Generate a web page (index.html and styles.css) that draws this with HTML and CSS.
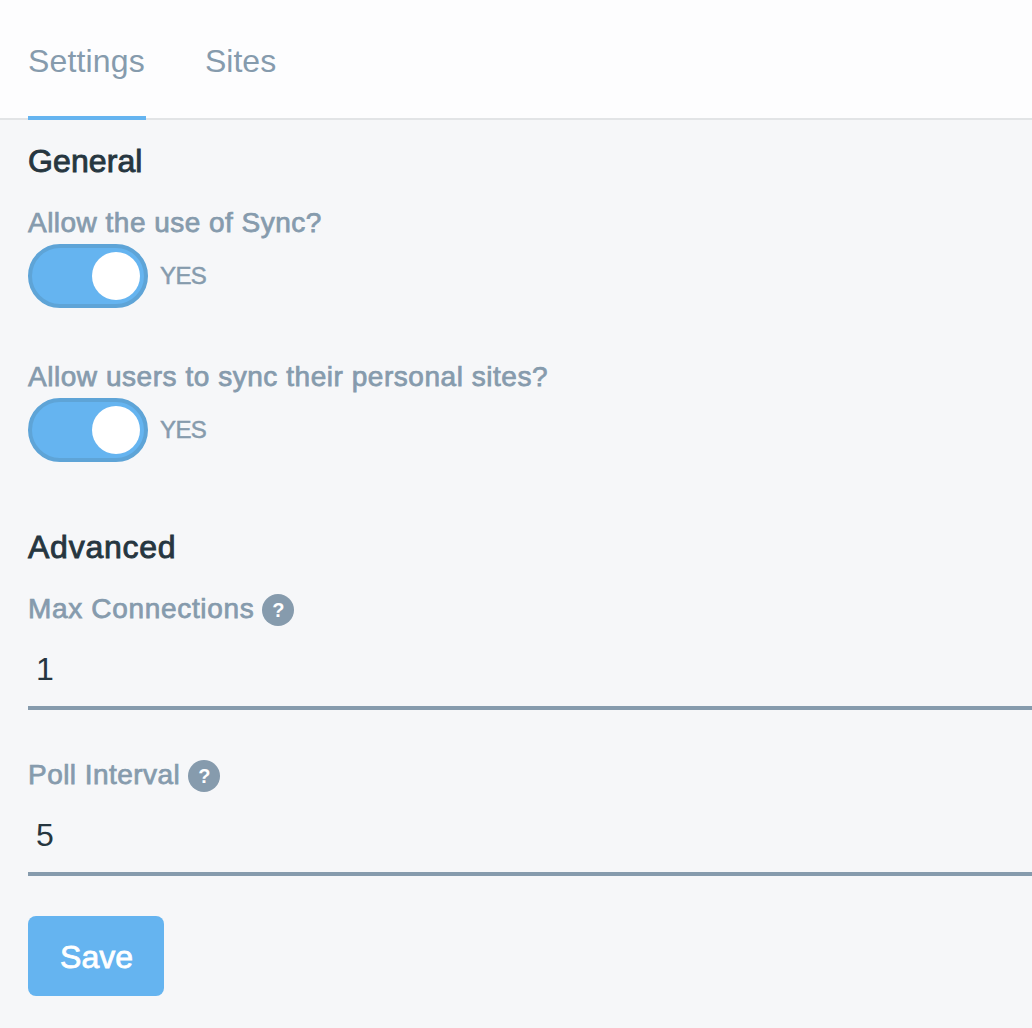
FILE: index.html
```html
<!DOCTYPE html>
<html lang="en">
<head>
<meta charset="utf-8">
<title>Sync settings</title>
<link rel="stylesheet" href="styles.css">
</head>
<body>
<nav class="tabs">
  <a class="tab active">Settings</a>
  <a class="tab">Sites</a>
</nav>
<main class="content">
  <h2 class="heading">General</h2>
  <section class="option">
    <div class="label">Allow the use of Sync?</div>
    <div class="toggle-row"><span class="toggle"><span class="knob"></span></span><span class="state">YES</span></div>
  </section>
  <section class="option">
    <div class="label label-users">Allow users to sync their personal sites?</div>
    <div class="toggle-row"><span class="toggle"><span class="knob"></span></span><span class="state">YES</span></div>
  </section>
  <h2 class="heading advanced">Advanced</h2>
  <section class="field">
    <div class="label label-max">Max Connections<span class="help">?</span></div>
    <div class="value">1</div>
  </section>
  <section class="field">
    <div class="label label-poll">Poll Interval<span class="help">?</span></div>
    <div class="value">5</div>
  </section>
  <button class="save">Save</button>
</main>
</body>
</html>
```
FILE: styles.css
```css
* { box-sizing: border-box; }
body { margin: 0; height: 1028px; overflow: hidden; background: #f6f7f9; color: #263640; font-family: "Liberation Sans", Arial, sans-serif; }
.tabs { display: flex; gap: 59px; height: 120px; padding-left: 28px; background: #fdfdfe; border-bottom: 2px solid #e2e4e6; }
.tab { height: 120px; padding-top: 42px; font-size: 32px; line-height: 38px; color: #869bad; white-space: nowrap; }
.active { width: 118px; border-bottom: 4px solid #65b4f0; letter-spacing: 0.15px; }
.content { padding-left: 28px; }
.heading { margin: 0; padding-top: 22px; height: 82px; font-size: 32px; line-height: 38px; font-weight: 400; letter-spacing: 0.1px; -webkit-text-stroke: 0.9px currentColor; }
.option { height: 154px; }
.label { display: flex; align-items: center; height: 42px; font-size: 28px; line-height: 42px; letter-spacing: 0.48px; color: #869bad; white-space: nowrap; -webkit-text-stroke: 0.75px currentColor; }
.label-users { letter-spacing: 0.54px; }
.label-max { letter-spacing: 0.67px; }
.label-poll { letter-spacing: 0.46px; }
.toggle-row { display: flex; align-items: center; gap: 12px; height: 64px; }
.toggle { display: flex; align-items: center; justify-content: flex-end; width: 120px; height: 64px; padding-right: 4px; border: 4px solid #5ea4d7; border-radius: 32px; background: #65b4f0; }
.knob { width: 48px; height: 48px; border-radius: 50%; background: #fff; }
.state { font-size: 24px; letter-spacing: -0.6px; color: #869bad; -webkit-text-stroke: 0.5px currentColor; }
.advanced { padding-top: 18px; height: 78px; letter-spacing: 0.75px; }
.field { height: 166px; }
.help { display: flex; align-items: center; justify-content: center; width: 32px; height: 32px; margin: 2px 0 0 8px; border-radius: 50%; background: #869bad; color: #fff; font-size: 20px; font-weight: 700; line-height: 32px; letter-spacing: 0; -webkit-text-stroke: 0; }
.value { height: 80px; padding: 20px 8px 0; border-bottom: 4px solid #869bad; font-size: 32px; line-height: 38px; }
.save { display: block; width: 136px; height: 80px; margin: -4px 0 0; padding: 2px 0 0 1px; border: 0; border-radius: 8px; background: #65b4f0; color: #fff; font: 32px/78px "Liberation Sans", Arial, sans-serif; -webkit-text-stroke: 0.8px currentColor; }
```
